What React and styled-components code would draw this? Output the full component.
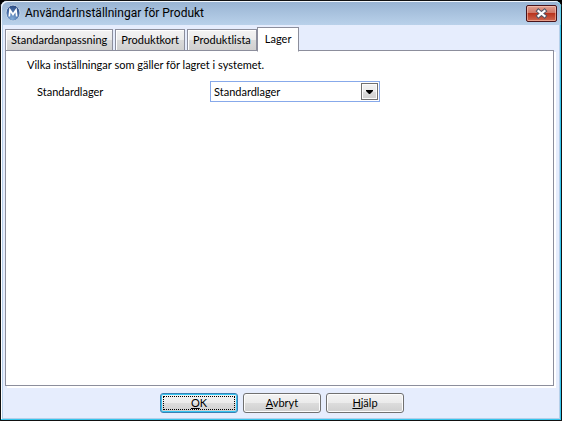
import React, { useState } from 'react';
import styled, { createGlobalStyle } from 'styled-components';

const GlobalStyle = createGlobalStyle`
  * {
    box-sizing: border-box;
  }

  body {
    margin: 0;
    background: #000;
    color: #000;
    font-family: Lato, 'Liberation Sans', sans-serif;
    font-size: 11px;
    line-height: 14px;
  }

  button, select {
    font: inherit;
    color: inherit;
  }
`;

const Dialog = styled.div`
  display: flex;
  flex-direction: column;
  min-height: 100vh;
  border: 1px solid #111;
  border-radius: 7px 7px 0 0;
  background: #e6edfd;
  box-shadow: inset -1px -1px 0 #35c5ec, inset 1px 1px 0 #fff, inset -2px -2px 0 #b5cfe9, inset 2px 0 0 #b5cfe9;
`;

const TitleBar = styled.header`
  display: flex;
  align-items: center;
  gap: 4px;
  height: 24px;
  padding: 0 4px;
  border-radius: 6px 6px 0 0;
  background: linear-gradient(#98b3d2, #b9d1ea);
  box-shadow: inset 1px 1px 0 #f2f7fc, inset -1px 0 0 #5fd0ee;
`;

const Title = styled.h1`
  flex: 1;
  margin: 0;
  font-family: Roboto, 'Noto Sans', sans-serif;
  font-size: 12px;
  font-weight: 400;
  line-height: 16px;
`;

const CloseButton = styled.button`
  display: flex;
  align-items: center;
  justify-content: center;
  width: 31px;
  height: 17px;
  padding: 0;
  border: 1px solid #48131a;
  border-radius: 2px;
  background: linear-gradient(#e0a090 0%, #d07767 45%, #b9341e 50%, #cf6850 100%);
  box-shadow: inset 0 0 0 1px rgba(255, 205, 190, 0.55);
`;

const Content = styled.main`
  display: flex;
  flex: 1;
  flex-direction: column;
  padding: 2px 7px 0 4px;
`;

const TabList = styled.div`
  display: flex;
  align-items: flex-end;
  gap: 2px;
  height: 24px;
`;

const Tab = styled.button`
  position: relative;
  height: ${(props) => (props.$active ? '25px' : '22px')};
  margin: ${(props) => (props.$active ? '0 0 -1px -2px' : '0')};
  padding: ${(props) => (props.$active ? '0 7px 2px' : '0 5px')};
  border: 1px solid #8c8e9c;
  border-bottom-color: ${(props) => (props.$active ? '#fff' : '#8c8e9c')};
  background: ${(props) => (props.$active ? '#fff' : 'linear-gradient(#f3f3f3, #ebebeb 50%, #dadada 50%, #d0d0d0)')};
  box-shadow: ${(props) => (props.$active ? 'none' : 'inset 1px 1px 0 #fff')};
  white-space: nowrap;
`;

const Panel = styled.section`
  flex: 1;
  margin-top: -1px;
  padding: 7px 21px;
  border: 1px solid #8c8e9c;
  background: #fff;
  box-shadow: 2px 2px 0 #fff;
`;

const Intro = styled.p`
  margin: 0;
`;

const Field = styled.div`
  display: grid;
  grid-template-columns: 173px 170px;
  align-items: center;
  margin: 9px 0 0 10px;
`;

const SelectBox = styled.div`
  display: grid;
  grid-template-columns: 1fr 19px;
  align-items: center;
  height: 21px;
  border: 1px solid #87a9ea;
  background: #fff;
`;

const Select = styled.select`
  grid-area: 1 / 1 / 2 / 3;
  width: 100%;
  height: 19px;
  padding: 0 22px 0 3px;
  border: 0;
  outline: 0;
  appearance: none;
  background: transparent;
`;

const Arrow = styled.span`
  display: flex;
  grid-area: 1 / 2;
  align-items: center;
  justify-content: center;
  width: 17px;
  height: 17px;
  justify-self: center;
  border: 1px solid #707070;
  background: linear-gradient(#f3f3f3, #ebebeb 50%, #dddddd 50%, #cfcfcf);
  box-shadow: inset 0 0 0 1px #fcfcfc;
  pointer-events: none;
`;

const Footer = styled.footer`
  display: flex;
  justify-content: center;
  gap: 5px;
  padding: 7px 0 7px 2px;
`;

const Button = styled.button`
  width: 78px;
  height: 20px;
  padding: 0;
  border: 1px solid ${(props) => (props.$primary ? '#3c7fb1' : '#707070')};
  border-radius: 3px;
  background: linear-gradient(#f3f3f3, #ebebeb 50%, #dddddd 50%, #cfcfcf);
  box-shadow: ${(props) => (props.$primary ? 'inset 0 0 0 1px #35c5f2' : 'inset 0 0 0 1px #fcfcfc')};
  outline: ${(props) => (props.$primary ? '1px dotted #000' : 'none')};
  outline-offset: -4px;
`;

const LogoIcon = () => (
  <svg width="16" height="18" viewBox="0 0 16 18" aria-hidden="true">
    <defs>
      <radialGradient id="logo" cx="45%" cy="85%" r="80%">
        <stop offset="0" stopColor="#80abd8" />
        <stop offset="0.6" stopColor="#4a70a8" />
        <stop offset="1" stopColor="#2f4f86" />
      </radialGradient>
    </defs>
    <ellipse cx="8" cy="9" rx="7" ry="8" fill="url(#logo)" stroke="#c4d5e9" />
    <path d="M4.3 12.5 5 6 8 10.5 11 6l.7 6.5" fill="none" stroke="#fff" strokeWidth="1.7" />
  </svg>
);

const CloseIcon = () => (
  <svg width="13" height="11" viewBox="0 0 13 11" aria-hidden="true">
    <path d="m3.5 3 6 5m0-5-6 5" stroke="#535666" strokeWidth="4.2" strokeLinecap="square" />
    <path d="m3.5 3 6 5m0-5-6 5" stroke="#fff" strokeWidth="2.2" strokeLinecap="square" />
  </svg>
);

const tabs = ['Standardanpassning', 'Produktkort', 'Produktlista', 'Lager'];

const App = () => {
  const [activeTab, setActiveTab] = useState('Lager');

  return (
    <>
      <GlobalStyle />
      <Dialog role="dialog" aria-labelledby="dialog-title">
        <TitleBar>
          <LogoIcon />
          <Title id="dialog-title">Användarinställningar för Produkt</Title>
          <CloseButton type="button" aria-label="Stäng">
            <CloseIcon />
          </CloseButton>
        </TitleBar>
        <Content>
          <TabList role="tablist">
            {tabs.map((tab) => (
              <Tab
                key={tab}
                type="button"
                role="tab"
                aria-selected={tab === activeTab}
                $active={tab === activeTab}
                onClick={() => setActiveTab(tab)}
              >
                {tab}
              </Tab>
            ))}
          </TabList>
          <Panel role="tabpanel">
            {activeTab === 'Lager' && (
              <>
                <Intro>Vilka inställningar som gäller för lagret i systemet.</Intro>
                <Field>
                  <label htmlFor="stock">Standardlager</label>
                  <SelectBox>
                    <Select id="stock" defaultValue="Standardlager">
                      <option>Standardlager</option>
                    </Select>
                    <Arrow>
                      <svg width="7" height="4" viewBox="0 0 7 4" aria-hidden="true">
                        <path d="M0 0h7v1L4 4H3L0 1z" />
                      </svg>
                    </Arrow>
                  </SelectBox>
                </Field>
              </>
            )}
          </Panel>
        </Content>
        <Footer>
          <Button type="button" $primary><u>O</u>K</Button>
          <Button type="button"><u>A</u>vbryt</Button>
          <Button type="button"><u>H</u>jälp</Button>
        </Footer>
      </Dialog>
    </>
  );
};

export default App;
